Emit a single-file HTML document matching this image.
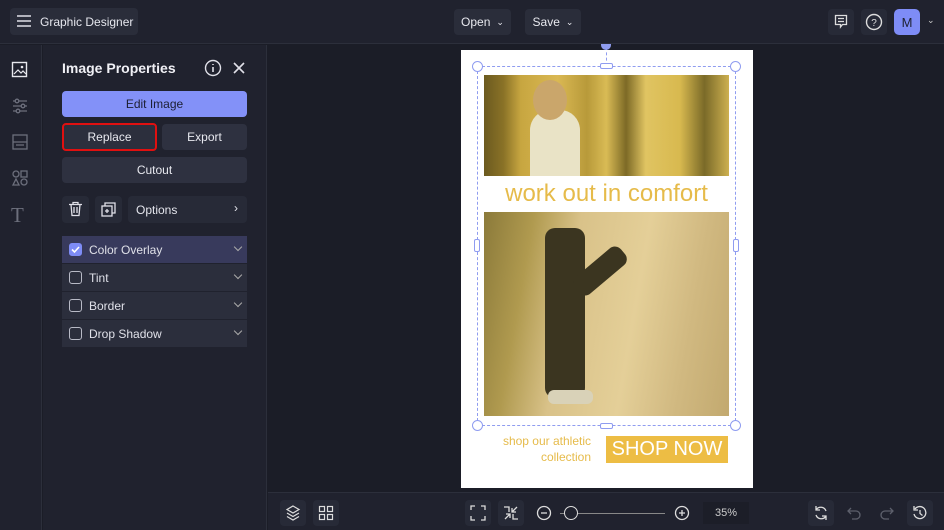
<!DOCTYPE html>
<html><head><style>
*{box-sizing:border-box;margin:0;padding:0}
body{width:944px;height:530px;background:#1b1d27;font-family:"Liberation Sans",sans-serif;color:#e4e5ec;position:relative;overflow:hidden;font-size:12px}
.abs{position:absolute}
.btn{position:absolute;background:#2e3140;border-radius:4px;color:#e8e9ef;display:flex;align-items:center;justify-content:center;font-size:12px}
.ib{position:absolute;background:#272a37;border-radius:4px}
.row{position:absolute;left:62px;width:185px;height:27px;background:#2b2e3c;display:flex;align-items:center;padding-left:7px;font-size:12px;color:#dfe0e8}
.cb{width:13px;height:13px;border:1.5px solid #b8bac6;border-radius:3px;margin-right:7px}
.chev{position:absolute;right:6px;top:8px;width:6px;height:6px;border-right:1.5px solid #aaa;border-bottom:1.5px solid #aaa;transform:rotate(45deg)}
</style></head><body>
<div class="abs" style="left:0;top:0;width:944px;height:44px;background:#20222e;border-bottom:1px solid #2c2f3b"></div>
<div class="ib" style="left:10px;top:8px;width:128px;height:27px;background:#2a2d3a"></div>
<svg class="abs" style="left:16px;top:14px" width="16" height="14"><path d="M1 2h14M1 7h14M1 12h14" stroke="#e0e0e8" stroke-width="1.6"/></svg>
<div class="abs" style="left:40px;top:15px;font-size:12px;color:#e6e7ee">Graphic Designer</div>
<div class="btn" style="left:454px;top:9px;width:57px;height:26px;background:#2a2d3a">Open <span style="font-size:9px;margin-left:6px">&#8964;</span></div>
<div class="btn" style="left:525px;top:9px;width:56px;height:26px;background:#2a2d3a">Save <span style="font-size:9px;margin-left:6px">&#8964;</span></div>
<div class="ib" style="left:828px;top:9px;width:26px;height:26px"></div>
<svg class="abs" style="left:834px;top:14px" width="14" height="15"><path d="M1.5 1.5h11v9h-4l-2 2.5v-2.5h-5z M4 4.5h6M4 7.5h6" stroke="#ddd" stroke-width="1.3" fill="none"/></svg>
<div class="ib" style="left:861px;top:9px;width:26px;height:26px"></div>
<svg class="abs" style="left:865px;top:13px" width="18" height="18"><circle cx="9" cy="9" r="7.5" stroke="#ddd" stroke-width="1.4" fill="none"/><text x="9" y="13" font-size="10" fill="#ddd" text-anchor="middle" font-family="Liberation Sans">?</text></svg>
<div class="abs" style="left:894px;top:9px;width:26px;height:26px;background:#7e8cf6;border-radius:5px;color:#1d2030;font-size:13px;display:flex;align-items:center;justify-content:center">M</div>
<div class="abs" style="left:927px;top:15px;font-size:9px;color:#ccc">&#8964;</div>
<div class="abs" style="left:0;top:45px;width:42px;height:485px;background:#20222e;border-right:1px solid #2c2f3b"></div>
<svg class="abs" style="left:11px;top:61px" width="18" height="18"><rect x="1.5" y="1.5" width="14" height="14" stroke="#e8e8ee" stroke-width="1.4" fill="none"/><path d="M3 13l4-4 3 3 2-2 3 3" stroke="#e8e8ee" stroke-width="1.2" fill="none"/><circle cx="11" cy="6" r="1.3" fill="#e8e8ee"/></svg>
<svg class="abs" style="left:11px;top:97px" width="18" height="18" stroke="#6c6f7c" stroke-width="1.3" fill="none"><path d="M2 4h14M2 9h14M2 14h14"/><circle cx="6" cy="4" r="1.8" fill="#20222e"/><circle cx="12" cy="9" r="1.8" fill="#20222e"/><circle cx="7" cy="14" r="1.8" fill="#20222e"/></svg>
<svg class="abs" style="left:11px;top:133px" width="18" height="18" stroke="#6c6f7c" stroke-width="1.3" fill="none"><rect x="2" y="2" width="14" height="14"/><path d="M2 9h14M5 12h8"/></svg>
<svg class="abs" style="left:11px;top:169px" width="18" height="18" stroke="#6c6f7c" stroke-width="1.3" fill="none"><circle cx="5" cy="5" r="3"/><rect x="10" y="2" width="6" height="6"/><path d="M5 10l3 6H2z"/><circle cx="13" cy="13" r="3"/></svg>
<div class="abs" style="left:11px;top:203px;font-family:'Liberation Serif',serif;font-size:21px;color:#6c6f7c">T</div>
<div class="abs" style="left:43px;top:45px;width:224px;height:485px;background:#20222e;border-right:1px solid #2c2f3b"></div>
<div class="abs" style="left:62px;top:60px;font-size:14px;font-weight:bold;color:#f0f0f5">Image Properties</div>
<svg class="abs" style="left:204px;top:59px" width="18" height="18"><circle cx="9" cy="9" r="7.5" stroke="#e0e0e8" stroke-width="1.4" fill="none"/><path d="M9 8v5M9 5v1" stroke="#e0e0e8" stroke-width="1.6"/></svg>
<svg class="abs" style="left:232px;top:61px" width="14" height="14"><path d="M2 2l10 10M12 2L2 12" stroke="#e0e0e8" stroke-width="1.6"/></svg>
<div class="btn" style="left:62px;top:91px;width:185px;height:26px;background:#8391f8;color:#1c1f33">Edit Image</div>
<div class="btn" style="left:62px;top:123px;width:95px;height:28px;border:2.5px solid #e01010;background:#2c2f3d">Replace</div>
<div class="btn" style="left:162px;top:124px;width:85px;height:26px">Export</div>
<div class="btn" style="left:62px;top:157px;width:185px;height:26px">Cutout</div>
<div class="ib" style="left:62px;top:196px;width:27px;height:27px"></div>
<svg class="abs" style="left:68px;top:201px" width="15" height="16" stroke="#e0e0e8" stroke-width="1.3" fill="none"><path d="M1 3.5h13M5 3.5V1.5h5v2M3 3.5l1 11h7l1-11M6 6v6M9 6v6"/></svg>
<div class="ib" style="left:95px;top:196px;width:27px;height:27px"></div>
<svg class="abs" style="left:101px;top:202px" width="15" height="15" stroke="#e0e0e8" stroke-width="1.3" fill="none"><rect x="1" y="4" width="10" height="10"/><path d="M4 4V1h10v10h-3M6 7v4M4 9h4"/></svg>
<div class="ib" style="left:128px;top:196px;width:119px;height:27px;display:flex;align-items:center;padding-left:8px;font-size:12px;color:#e4e5ec">Options<span style="position:absolute;right:9px;top:5px">&#8250;</span></div>
<div class="row" style="top:236px;background:#383a5c"><div class="cb" style="background:#7e8cf6;border-color:#7e8cf6;position:relative"><svg style="position:absolute;left:0;top:0" width="11" height="11"><path d="M2 5.5l2.5 2.5L9 3" stroke="#fff" stroke-width="1.6" fill="none"/></svg></div>Color Overlay<div class="chev"></div></div>
<div class="row" style="top:264px"><div class="cb"></div>Tint<div class="chev"></div></div>
<div class="row" style="top:292px"><div class="cb"></div>Border<div class="chev"></div></div>
<div class="row" style="top:320px"><div class="cb"></div>Drop Shadow<div class="chev"></div></div>
<div class="abs" style="left:461px;top:50px;width:292px;height:438px;background:#fff"></div>
<div class="abs" style="left:484px;top:75px;width:245px;height:101px;background:linear-gradient(90deg,#6b5a1f 0,#8a7227 8%,#c7a640 15%,#dab853 30%,#b89a3a 42%,#d9bb55 50%,#7d6a26 58%,#e0c462 66%,#d8b94f 80%,#7a6a28 90%,#cdb050 100%)"></div>
<div class="abs" style="left:530px;top:110px;width:50px;height:66px;background:#e9e3c6;border-radius:20px 20px 0 0"></div>
<div class="abs" style="left:533px;top:80px;width:34px;height:40px;background:#caa66b;border-radius:50%"></div>
<div class="abs" style="left:484px;top:212px;width:245px;height:204px;background:linear-gradient(100deg,#8b7a3a 0,#b09a4f 18%,#d9c289 35%,#e4cf98 60%,#d1b981 80%,#c2a96f 100%)"></div>
<div class="abs" style="left:545px;top:228px;width:40px;height:170px;background:#3b3520;border-radius:10px"></div>
<div class="abs" style="left:570px;top:260px;width:60px;height:22px;background:#3b3520;transform:rotate(-40deg);border-radius:8px"></div>
<div class="abs" style="left:548px;top:390px;width:45px;height:14px;background:#d9d2b8;border-radius:6px"></div>
<div class="abs" style="left:470px;top:180px;width:273px;text-align:center;color:#e6bb4a;font-size:24px;white-space:nowrap;font-family:'Liberation Sans',sans-serif">work out in comfort</div>
<div class="abs" style="left:474px;top:433px;width:117px;text-align:right;color:#e6bb4a;font-size:12px;line-height:16px;font-family:'Liberation Sans',sans-serif">shop our athletic<br>collection</div>
<div class="abs" style="left:606px;top:436px;width:122px;height:27px;background:#edbd44;color:#fff;font-size:20px;display:flex;align-items:center;justify-content:center;font-family:'Liberation Sans',sans-serif">SHOP NOW</div>
<div class="abs" style="left:477px;top:66px;width:259px;height:360px;border:1.5px dashed #8f9cf0"></div>
<div class="abs" style="left:606px;top:47px;height:19px;border-left:1.5px dashed #8f9cf0"></div>
<div class="abs" style="left:601px;top:44px;width:10px;height:6px;background:#8f9cf0;border-radius:0 0 5px 5px"></div>
<div class="abs" style="left:472px;top:61px;width:11px;height:11px;border:1.5px solid #8f9cf0;border-radius:50%;background:#fff"></div>
<div class="abs" style="left:730px;top:61px;width:11px;height:11px;border:1.5px solid #8f9cf0;border-radius:50%;background:#fff"></div>
<div class="abs" style="left:472px;top:420px;width:11px;height:11px;border:1.5px solid #8f9cf0;border-radius:50%;background:#fff"></div>
<div class="abs" style="left:730px;top:420px;width:11px;height:11px;border:1.5px solid #8f9cf0;border-radius:50%;background:#fff"></div>
<div class="abs" style="left:600px;top:63px;width:13px;height:6px;border:1.5px solid #8f9cf0;background:#fff;border-radius:2px"></div>
<div class="abs" style="left:600px;top:423px;width:13px;height:6px;border:1.5px solid #8f9cf0;background:#fff;border-radius:2px"></div>
<div class="abs" style="left:474px;top:239px;width:6px;height:13px;border:1.5px solid #8f9cf0;background:#fff;border-radius:2px"></div>
<div class="abs" style="left:733px;top:239px;width:6px;height:13px;border:1.5px solid #8f9cf0;background:#fff;border-radius:2px"></div>
<div class="abs" style="left:268px;top:492px;width:676px;height:38px;background:#20222e;border-top:1px solid #2c2f3b"></div>
<div class="ib" style="left:280px;top:500px;width:26px;height:26px"></div>
<svg class="abs" style="left:285px;top:505px" width="16" height="16" stroke="#ddd" stroke-width="1.2" fill="none"><path d="M8 1l6 3.5-6 3.5-6-3.5z M2 8l6 3.5 6-3.5 M2 11.5l6 3.5 6-3.5"/></svg>
<div class="ib" style="left:313px;top:500px;width:26px;height:26px"></div>
<svg class="abs" style="left:318px;top:505px" width="16" height="16" stroke="#ddd" stroke-width="1.2" fill="none"><rect x="1.5" y="1.5" width="5" height="5"/><rect x="9.5" y="1.5" width="5" height="5"/><rect x="1.5" y="9.5" width="5" height="5"/><rect x="9.5" y="9.5" width="5" height="5"/></svg>
<div class="ib" style="left:465px;top:500px;width:26px;height:26px"></div>
<svg class="abs" style="left:470px;top:505px" width="16" height="16" stroke="#ddd" stroke-width="1.3" fill="none"><path d="M1 5V1h4M11 1h4v4M15 11v4h-4M5 15H1v-4"/></svg>
<div class="ib" style="left:498px;top:500px;width:26px;height:26px"></div>
<svg class="abs" style="left:503px;top:505px" width="16" height="16" stroke="#ddd" stroke-width="1.3" fill="none"><path d="M1 2h5v5M14 2l-5 5M9 3v4h4M2 14l5-5M3 9h4v4M15 14h-5v-5"/></svg>
<svg class="abs" style="left:536px;top:505px" width="16" height="16"><circle cx="8" cy="8" r="6.5" stroke="#ddd" stroke-width="1.3" fill="none"/><path d="M5 8h6" stroke="#ddd" stroke-width="1.3"/></svg>
<div class="abs" style="left:560px;top:513px;width:105px;height:1px;background:#888"></div>
<div class="abs" style="left:564px;top:506px;width:14px;height:14px;border:1.5px solid #ddd;border-radius:50%;background:#20222e"></div>
<svg class="abs" style="left:674px;top:505px" width="16" height="16"><circle cx="8" cy="8" r="6.5" stroke="#ddd" stroke-width="1.3" fill="none"/><path d="M5 8h6M8 5v6" stroke="#ddd" stroke-width="1.3"/></svg>
<div class="abs" style="left:703px;top:502px;width:46px;height:22px;background:#1c1e28;font-size:11px;color:#ccc;display:flex;align-items:center;justify-content:center">35%</div>
<div class="ib" style="left:808px;top:500px;width:26px;height:26px"></div>
<svg class="abs" style="left:813px;top:505px" width="16" height="16" stroke="#ddd" stroke-width="1.3" fill="none"><path d="M13 6A5.5 5.5 0 0 0 3 5M3 1v4h4M3 10a5.5 5.5 0 0 0 10 1M13 15v-4H9"/></svg>
<svg class="abs" style="left:846px;top:505px" width="16" height="16" stroke="#5d606c" stroke-width="1.3" fill="none"><path d="M5 3L2 6l3 3M2 6h8a4 4 0 0 1 0 8H6"/></svg>
<svg class="abs" style="left:879px;top:505px" width="16" height="16" stroke="#5d606c" stroke-width="1.3" fill="none"><path d="M11 3l3 3-3 3M14 6H6a4 4 0 0 0 0 8h4"/></svg>
<div class="ib" style="left:907px;top:500px;width:26px;height:26px"></div>
<svg class="abs" style="left:912px;top:505px" width="16" height="16" stroke="#ddd" stroke-width="1.3" fill="none"><path d="M3 4a6 6 0 1 1-1 5M2 1v4h4M8 5v3.5l2.5 2"/></svg>
</body></html>
